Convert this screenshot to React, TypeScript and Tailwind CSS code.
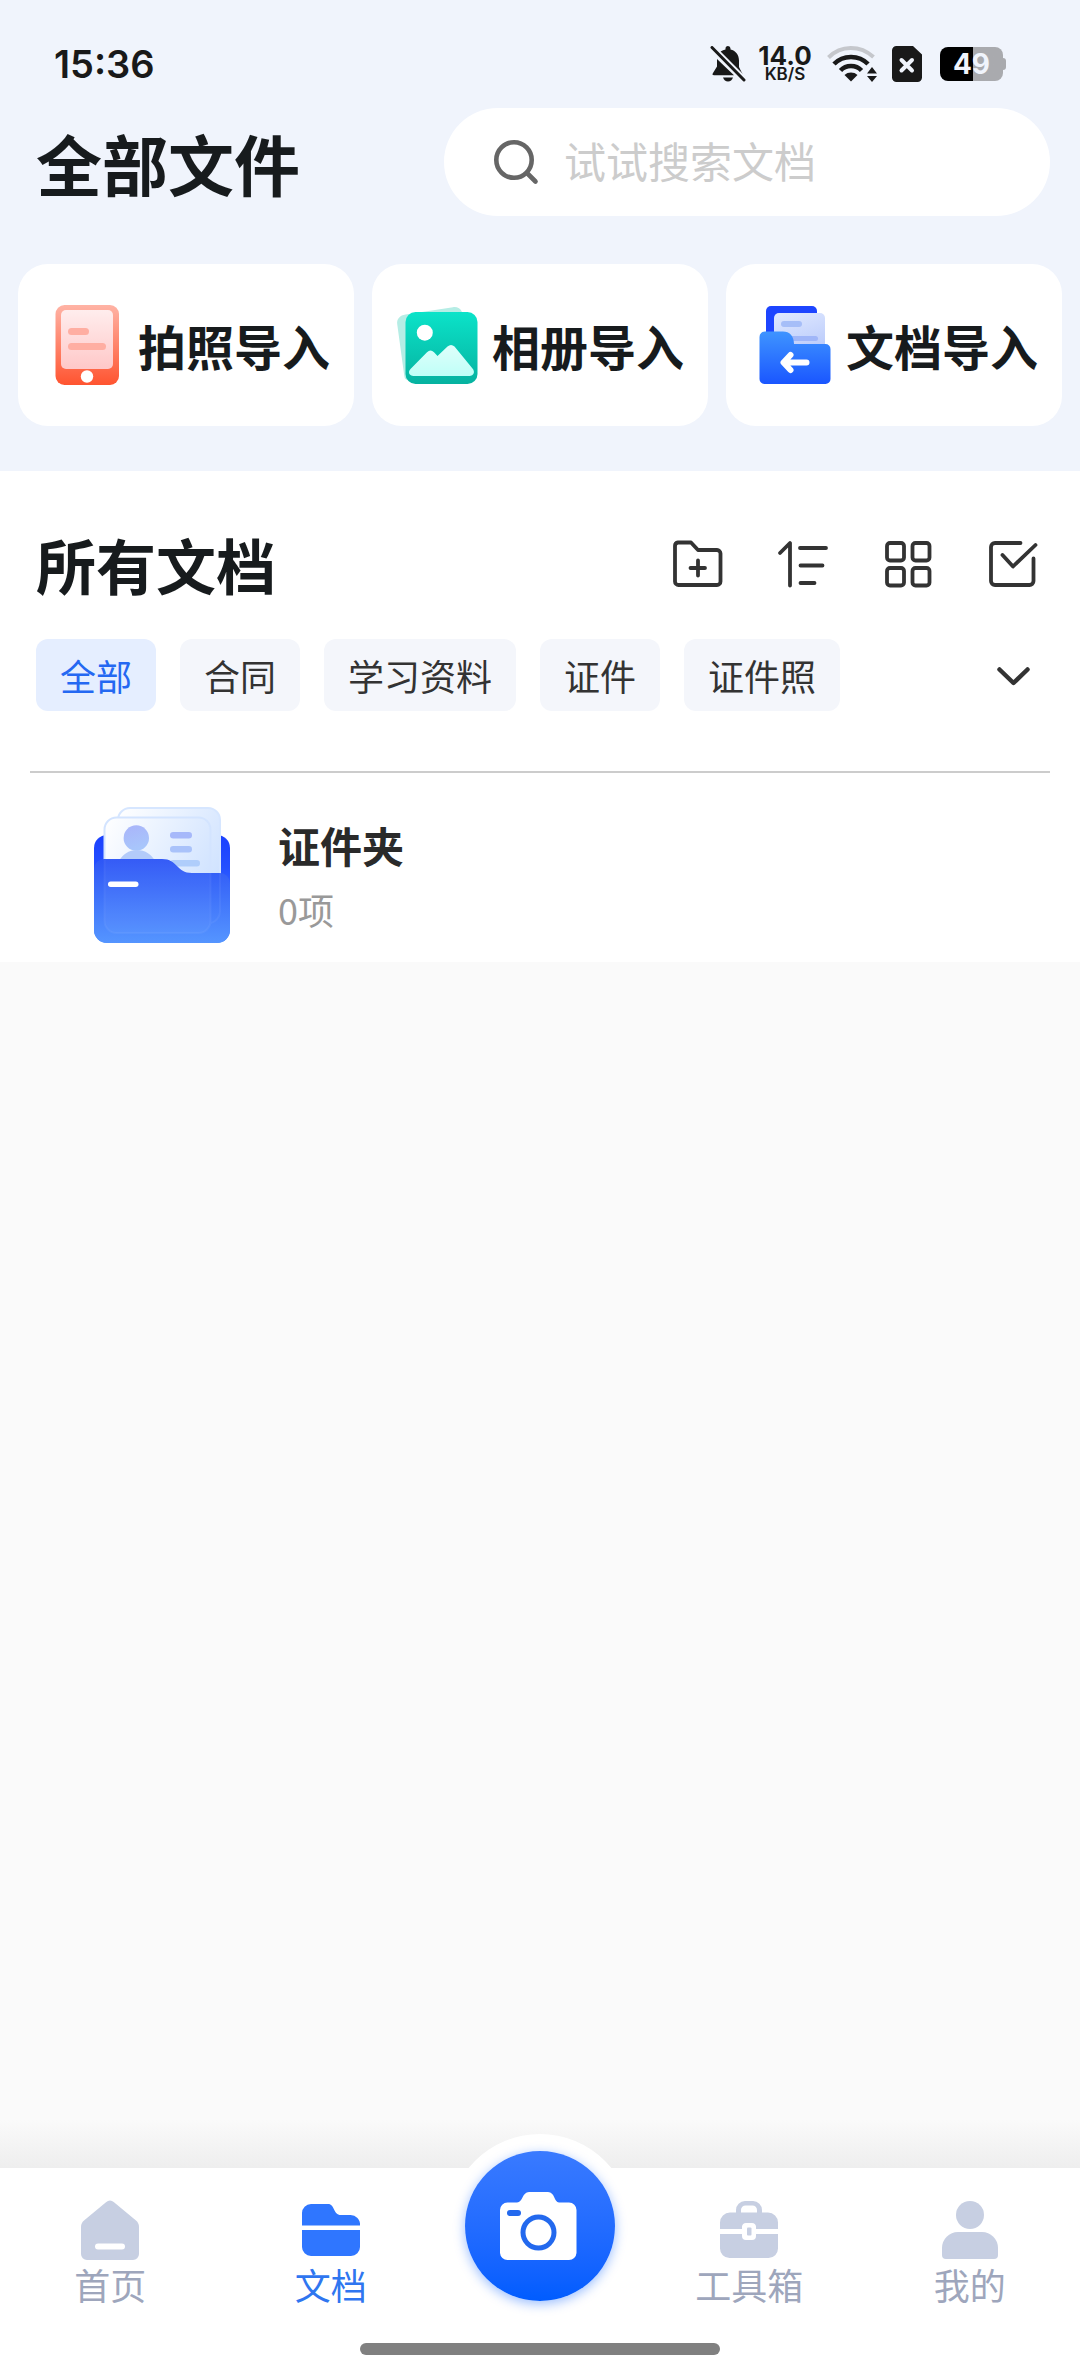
import { useState } from 'react'
import type { ReactNode } from 'react'

const CATEGORIES = ['全部', '合同', '学习资料', '证件', '证件照']

function StatusBar() {
  return (
    <div className="flex h-[108px] items-center justify-between pt-5 pl-[54px] pr-[74px] text-[#191919]">
      <span className="font-['Inter'] text-[38px] leading-none font-semibold">15:36</span>
      <div className="flex items-center">
        <svg className="h-9 w-9" viewBox="0 0 36 36" fill="currentColor">
          <path d="M8 8.500 29 29 31 29C33 29 32.500 27.500 31.500 26L29 21V14.500C29 9 25.500 4.500 20.500 3.500V2.500A2.500 2.500 0 0 0 15.500 2.500V3.500C12 4.200 9.800 6 8 8.500Z" />
          <path d="M7 13V20.500L3 27C2 28.500 2.500 29.200 4 29.200H24Z" />
          <path d="M13 31.500H23C22 34.300 20.500 35.500 18 35.500S14 34.300 13 31.500Z" />
          <path d="M5 2 36 33" stroke="#F0F4FC" strokeWidth="3" />
          <path d="M2 1.500 34 34" stroke="currentColor" strokeWidth="3" strokeLinecap="round" />
        </svg>
        <div className="ml-3 flex w-[54px] flex-col items-center font-['Inter']">
          <span className="text-[26px] leading-[20px] font-bold">14.0</span>
          <span className="text-[17px] leading-[17px] font-semibold">KB/S</span>
        </div>
        <svg className="ml-3.5 h-9 w-[52px]" viewBox="0 0 52 36" fill="none">
          <path d="M2.500 11.500C15-1 34-1 47.500 11" stroke="#C5C7CC" strokeWidth="4" />
          <path d="M8 18C17 8.500 33 8.500 42 18" stroke="currentColor" strokeWidth="4.500" />
          <path d="M14.500 24.500C20 18.500 30 18.500 35.500 24.500" stroke="currentColor" strokeWidth="4.500" />
          <path d="M18.500 29C22 25.700 28 25.700 31.500 29L25 35.500Z" fill="currentColor" />
          <path d="M46 21 51 27.500H41ZM46 36 41 30H51Z" fill="currentColor" />
        </svg>
        <svg className="ml-3.5 h-9 w-[30px]" viewBox="0 0 30 36">
          <path d="M4.500 0H21L30 8.500V31.500A4.500 4.500 0 0 1 25.500 36H4.500A4.500 4.500 0 0 1 0 31.500V4.500A4.500 4.500 0 0 1 4.500 0Z" fill="currentColor" />
          <path d="M9.500 14 20 24.500M20 14 9.500 24.500" stroke="#F0F4FC" strokeWidth="4" strokeLinecap="round" />
        </svg>
        <div className="ml-[18px] flex items-center">
          <div className="flex h-[34px] w-[63px] items-center justify-center rounded-lg bg-linear-to-r from-black from-52% to-[#A9AAAE] to-52% font-['Inter'] text-[28px] leading-none font-bold text-[#F0F4FC]">
            49
          </div>
          <div className="h-3 w-[3px] rounded-r-full bg-[#A9AAAE]" />
        </div>
      </div>
    </div>
  )
}

function PhotoIcon() {
  return (
    <svg className="h-[84px] w-[84px]" viewBox="0 0 84 84">
      <defs>
        <linearGradient id="photoBody" x1="0" y1="0" x2="0" y2="1">
          <stop stopColor="#FFB3A5" />
          <stop offset="1" stopColor="#FF5430" />
        </linearGradient>
        <linearGradient id="photoSheet" x1="0" y1="0" x2="0" y2="1">
          <stop stopColor="#FFEDED" />
          <stop offset="1" stopColor="#FFC8C8" />
        </linearGradient>
      </defs>
      <rect x="13.500" y="2" width="63.500" height="80" rx="9" fill="url(#photoBody)" />
      <rect x="19" y="7" width="52" height="59" rx="5" fill="url(#photoSheet)" />
      <rect x="26" y="25" width="21" height="7" rx="3.500" fill="#FFAEA2" />
      <rect x="26" y="40" width="38" height="7" rx="3.500" fill="#FFAEA2" />
      <circle cx="45" cy="73.500" r="6.200" fill="#fff" />
    </svg>
  )
}

function AlbumIcon() {
  return (
    <svg className="h-[84px] w-[84px]" viewBox="0 0 84 84">
      <defs>
        <linearGradient id="albumBody" x1="0" y1="0" x2="0" y2="1">
          <stop stopColor="#0BE3C9" />
          <stop offset="1" stopColor="#06B2A0" />
        </linearGradient>
        <linearGradient id="albumHill" x1="0" y1="0" x2="0" y2="1">
          <stop stopColor="#DFFFFB" />
          <stop offset="1" stopColor="#BFFFF7" />
        </linearGradient>
      </defs>
      <path d="M9.500 11.500 57 4.200C61 3.600 64.500 5.500 66 9L12 77C9.800 77 8.600 75.500 8.300 73L1.200 21C.6 16 4 12.300 9.500 11.500Z" fill="#B5EDE5" />
      <rect x="9.500" y="9" width="72" height="72" rx="10" fill="url(#albumBody)" />
      <circle cx="28.800" cy="29.700" r="8" fill="#fff" />
      <path d="M14.500 66 31 49.200Q34.500 46 38 49.200L41.500 53 51.500 43.500Q55 40.500 58.500 43.500L76.500 65.500C79.500 69 77.500 73 73.500 73H17.500C13.300 73 11.500 69 14.500 66Z" fill="url(#albumHill)" />
    </svg>
  )
}

function DocumentIcon() {
  return (
    <svg className="h-[84px] w-[84px]" viewBox="0 0 84 84">
      <defs>
        <linearGradient id="docSheet" x1="0" y1="0" x2="0.300" y2="1">
          <stop stopColor="#E0E9FF" />
          <stop offset="1" stopColor="#B3C5FA" />
        </linearGradient>
        <linearGradient id="docFolder" x1="0" y1="0" x2="0" y2="1">
          <stop stopColor="#3F94FF" />
          <stop offset="1" stopColor="#1A56FF" />
        </linearGradient>
      </defs>
      <rect x="16" y="3" width="51" height="50" rx="5" fill="#1D45FF" />
      <rect x="24" y="10" width="51" height="55" rx="5" fill="url(#docSheet)" />
      <rect x="31" y="18" width="21" height="6" rx="3" fill="#A6BEF8" />
      <rect x="31" y="33" width="37" height="5" rx="2.500" fill="#A0B6F8" />
      <path d="M15 28.500H33C39.500 28.500 44 33 44 41H75.500A5 5 0 0 1 80.500 46V76A5 5 0 0 1 75.500 81H14.500A5 5 0 0 1 9.500 76V34A5.500 5.500 0 0 1 15 28.500Z" fill="url(#docFolder)" />
      <path d="M56.500 59.500H36M40.500 52 33.500 59.500 40.500 67" fill="none" stroke="#fff" strokeWidth="6" strokeLinecap="round" strokeLinejoin="round" />
    </svg>
  )
}

function ImportCard({ icon, label }: { icon: ReactNode; label: string }) {
  return (
    <button className="flex h-[162px] flex-1 items-center justify-center gap-3 rounded-[30px] bg-white">
      {icon}
      <span className="text-[48px] leading-[60px] font-bold whitespace-nowrap text-[#171B1D]">{label}</span>
    </button>
  )
}

function ToolButton({ label, children }: { label: string; children: ReactNode }) {
  return (
    <button aria-label={label}>
      <svg
        className="h-[54px] w-[54px]"
        viewBox="0 0 54 54"
        fill="none"
        stroke="#333333"
        strokeWidth="3.800"
        strokeLinecap="round"
        strokeLinejoin="round"
      >
        {children}
      </svg>
    </button>
  )
}

function CardFolderIcon() {
  return (
    <svg className="h-[136px] w-[136px] shrink-0" viewBox="0 0 136 136">
      <defs>
        <linearGradient id="folderBack" x1="0" y1="0" x2="0" y2="1">
          <stop stopColor="#1A40FF" />
          <stop offset="0.300" stopColor="#2450FF" />
          <stop offset="1" stopColor="#5899FF" />
        </linearGradient>
        <linearGradient id="folderFront" x1="0" y1="0" x2="0" y2="1">
          <stop stopColor="#2D55F6" />
          <stop offset="1" stopColor="#5595FF" />
        </linearGradient>
        <linearGradient id="folderSheet" x1="0" y1="0" x2="1" y2="0.600">
          <stop stopColor="#FFFFFF" />
          <stop offset="1" stopColor="#CFE2FF" />
        </linearGradient>
        <linearGradient id="folderPerson" x1="0" y1="0" x2="0.300" y2="1">
          <stop stopColor="#A9B4FA" />
          <stop offset="1" stopColor="#A8C6FB" />
        </linearGradient>
      </defs>
      <rect y="28" width="136" height="108" rx="13" fill="url(#folderBack)" />
      <rect x="24" y="1" width="102" height="116" rx="12" fill="url(#folderSheet)" stroke="#D6E6FF" strokeWidth="2" />
      <rect x="10.500" y="10.500" width="106" height="115" rx="12" fill="url(#folderSheet)" stroke="#D3E4FF" strokeWidth="2" />
      <circle cx="42.300" cy="31" r="12.700" fill="url(#folderPerson)" />
      <path d="M24 56C28 47 35 43 43 43S58 47 62 56Z" fill="#B3CBFA" />
      <rect x="76" y="25" width="22" height="6.500" rx="3.200" fill="#A6B8FA" />
      <rect x="76" y="39" width="22" height="6.500" rx="3.200" fill="#A9C2FA" />
      <rect x="76" y="53" width="30" height="6.500" rx="3.200" fill="#AFCDFB" />
      <path d="M10 52H68C84 52 82 66 98 66H126A10 10 0 0 1 136 76V123A13 13 0 0 1 123 136H13A13 13 0 0 1 0 123V62A10 10 0 0 1 10 52Z" fill="url(#folderFront)" />
      <path d="M10.500 52H68C84 52 82 66 98 66H116.500V114A12 12 0 0 1 104.500 126H22.500A12 12 0 0 1 10.500 114Z" fill="#fff" fillOpacity="0.040" />
      <path d="M116.500 66V114A12 12 0 0 1 104.500 126H22.500A12 12 0 0 1 10.500 114V53M126 66V105A12 12 0 0 1 117 116" fill="none" stroke="#fff" strokeOpacity="0.050" strokeWidth="2" />
      <rect x="14" y="74.500" width="30.500" height="5.500" rx="2.700" fill="#fff" />
    </svg>
  )
}

function NavItem({ label, active = false, children }: { label: string; active?: boolean; children: ReactNode }) {
  return (
    <a href="#" className="flex flex-1 flex-col items-center pt-[30px]" aria-current={active ? 'page' : undefined}>
      <svg className={`h-16 w-16 ${active ? 'text-[#2F76FF]' : 'text-[#C7CFE2]'}`} viewBox="0 0 64 64" fill="currentColor">
        {children}
      </svg>
      <span className={`text-[36px] leading-[45px] ${active ? 'text-[#2F76F0]' : 'text-[#9EA6BC]'}`}>{label}</span>
    </a>
  )
}

function BottomNav() {
  return (
    <nav className="relative bg-white pb-[21px]">
      <div className="absolute -top-[34px] left-1/2 h-[184px] w-[184px] -translate-x-1/2 rounded-full bg-white" />
      <div className="relative flex h-[154px]">
        <NavItem label="首页">
          <path fillRule="evenodd" d="M28 4.200Q32 .8 36 4.200L58 22.500Q61 25 61 29V56A6 6 0 0 1 55 62H9A6 6 0 0 1 3 56V29Q3 25 6 22.500ZM20 45.500A2.700 2.700 0 0 0 20 51.500H44A2.700 2.700 0 0 0 44 45.500Z" />
        </NavItem>
        <NavItem label="文档" active>
          <path d="M3 27.500V15A9 9 0 0 1 12 6H29C36 6 34 17 42 17H51A9.500 9.500 0 0 1 61 27.500ZM3 32H61V49A9 9 0 0 1 52 58H12A9 9 0 0 1 3 49Z" />
        </NavItem>
        <div className="flex w-[198px] justify-center">
          <button
            aria-label="拍照"
            className="-mt-[17px] flex h-[150px] w-[150px] items-center justify-center rounded-full bg-linear-to-b from-[#397AFF] to-[#005CFF] shadow-[0_3px_12px_rgba(0,92,255,0.4)]"
          >
            <svg className="h-20 w-20" viewBox="0 0 80 80">
              <path d="M29 6H48C55 6 54 16.500 59 16.500H69A7.500 7.500 0 0 1 76.500 24V67A7.500 7.500 0 0 1 69 74H7.500A7.500 7.500 0 0 1 0 67V24A7.500 7.500 0 0 1 7.500 16.500H17C23 16.500 22 6 29 6Z" fill="#fff" />
              <circle cx="38.500" cy="46.500" r="15.500" fill="none" stroke="#2369EE" strokeWidth="5" />
              <rect x="7" y="24" width="14" height="6" rx="3" fill="#2369EE" />
            </svg>
          </button>
        </div>
        <NavItem label="工具箱">
          <path fillRule="evenodd" d="M19 14.500V12A9 9 0 0 1 28 3H36A9 9 0 0 1 45 12V14.500H51A10 10 0 0 1 61 24.500V31H39V28.500A4 4 0 0 0 35 25H29A4 4 0 0 0 25 28.500V31H3V24.500A10 10 0 0 1 13 14.500ZM24 14.500H40V12A4.500 4.500 0 0 0 35.500 7.500H28.500A4.500 4.500 0 0 0 24 12Z" />
          <path d="M3 36H25V38A4 4 0 0 0 29 42H35A4 4 0 0 0 39 38V36H61V50.500A9.500 9.500 0 0 1 51.500 60H12.500A9.500 9.500 0 0 1 3 50.500Z" />
          <rect x="30" y="29.500" width="4.500" height="8" rx="1" />
        </NavItem>
        <NavItem label="我的">
          <circle cx="32" cy="17" r="14" />
          <path d="M20 34H44A16 16 0 0 1 60 50V57A4 4 0 0 1 56 61H8A4 4 0 0 1 4 57V50A16 16 0 0 1 20 34Z" />
        </NavItem>
      </div>
      <div className="relative mx-auto mt-[21px] h-3 w-1/3 rounded-full bg-[#808080]" />
    </nav>
  )
}

export default function App() {
  const [category, setCategory] = useState('全部')

  return (
    <div className="flex min-h-screen flex-col bg-[#FAFAFA] font-['Noto_Sans_CJK_SC',sans-serif]">
      <header className="bg-[#F0F4FC] pb-[45px]">
        <StatusBar />
        <div className="flex items-center justify-between pr-[30px] pl-9">
          <h1 className="text-[66px] leading-[84px] font-bold text-[#171B1D]">全部文件</h1>
          <label className="flex h-[108px] w-[606px] items-center rounded-full bg-white pl-12">
            <svg className="h-12 w-12 shrink-0" viewBox="0 0 48 48" fill="none" stroke="#666666" strokeWidth="4.600" strokeLinecap="round">
              <circle cx="22" cy="22" r="17.700" />
              <path d="m35 35 8.500 8.500" />
            </svg>
            <input
              type="search"
              aria-label="搜索文档"
              placeholder="试试搜索文档"
              className="ml-6 min-w-0 flex-1 bg-transparent pb-1 text-[42px] leading-[60px] text-[#333333] outline-none placeholder:text-[#CCCCCC]"
            />
          </label>
        </div>
        <div className="mt-12 flex gap-[18px] px-[18px]">
          <ImportCard icon={<PhotoIcon />} label="拍照导入" />
          <ImportCard icon={<AlbumIcon />} label="相册导入" />
          <ImportCard icon={<DocumentIcon />} label="文档导入" />
        </div>
      </header>

      <main className="flex flex-1 flex-col">
        <section className="bg-white pt-[57px]">
          <div className="flex h-[72px] items-center justify-between pr-10 pl-9">
            <h2 className="text-[60px] leading-[72px] font-bold text-[#171B1D]">所有文档</h2>
            <div className="flex gap-[51px]">
              <ToolButton label="新建文件夹">
                <path d="M7 5.500H20L27 13H46A3.500 3.500 0 0 1 49.500 16.500V44.500A3.500 3.500 0 0 1 46 48H7.500A3.500 3.500 0 0 1 4 44.500V9A3.500 3.500 0 0 1 7 5.500ZM19.500 31H34M27 23.500V38.500" />
              </ToolButton>
              <ToolButton label="排序">
                <path d="M4 16 14 6V48.500M24 11H50M24.500 28.500H46.500M24.500 46H38.500" />
              </ToolButton>
              <ToolButton label="网格视图">
                <rect x="6" y="6" width="17" height="17.500" rx="3" />
                <rect x="31.500" y="6" width="17" height="17.500" rx="3" />
                <rect x="6" y="31" width="17" height="17.500" rx="3" />
                <rect x="31.500" y="31" width="17" height="17.500" rx="3" />
              </ToolButton>
              <ToolButton label="选择">
                <path d="M34.500 6H9A4 4 0 0 0 5 10V44A4 4 0 0 0 9 48H43.500A4 4 0 0 0 47.500 44V21.500M16.500 18 27 29.500 49.500 8" />
              </ToolButton>
            </div>
          </div>

          <div className="mt-[39px] flex items-center justify-between pr-10 pl-9">
            <div className="flex gap-6">
              {CATEGORIES.map(name => (
                <button
                  key={name}
                  onClick={() => setCategory(name)}
                  className={`h-[72px] rounded-xl px-6 text-[36px] leading-[48px] ${
                    name === category ? 'bg-[#E5EEFF] text-[#2468F2]' : 'bg-[#F4F6FB] text-[#333333]'
                  }`}
                >
                  {name}
                </button>
              ))}
            </div>
            <button aria-label="展开分类">
              <svg className="h-[54px] w-[54px]" viewBox="0 0 54 54" fill="none" stroke="#333333" strokeWidth="4.500" strokeLinecap="round" strokeLinejoin="round">
                <path d="M13.500 21.500 27.500 35 41.500 21.500" />
              </svg>
            </button>
          </div>

          <hr className="mx-[30px] mt-[60px] border-t-2 border-[#CCCCCC]" />

          <a href="#" className="flex items-center gap-12 pt-[34px] pb-[19px] pl-[94px]">
            <CardFolderIcon />
            <div className="flex flex-col gap-1 pt-1">
              <span className="text-[42px] leading-[60px] font-bold text-[#2A2A2A]">证件夹</span>
              <span className="text-[36px] leading-[60px] text-[#999999]">0项</span>
            </div>
          </a>
        </section>
        <div className="mt-auto h-12 bg-linear-to-b from-transparent to-[#EEEEEE]" />
      </main>

      <BottomNav />
    </div>
  )
}
